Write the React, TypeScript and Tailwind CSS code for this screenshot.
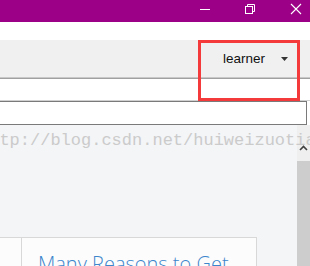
import React from "react";

export default function App() {
  return (
    <div className="relative w-[310px] h-[266px] overflow-hidden bg-white flex flex-col" style={{ fontFamily: "'Liberation Sans', Arial, sans-serif" }}>
      {/* Title bar */}
      <div className="h-[22px] bg-[#9b0087] flex items-center justify-end shrink-0">
        <svg width="310" height="22" viewBox="0 0 310 22" className="block">
          <line x1="200" y1="9.5" x2="210" y2="9.5" stroke="#fff" strokeWidth="1" />
          <rect x="245.5" y="6.5" width="7" height="7" fill="none" stroke="#fff" strokeWidth="1" />
          <path d="M247.5 6.5 V4.5 H254.5 V11.5 H252.5" fill="none" stroke="#fff" strokeWidth="1" />
          <path d="M291 4 L301 14 M301 4 L291 14" stroke="#fff" strokeWidth="1.1" />
        </svg>
      </div>
      <div className="h-[18px] bg-white shrink-0" />
      {/* Header */}
      <div className="h-[37px] bg-[#f0f0f0] flex items-center justify-end pr-[21px] shrink-0">
        <span className="text-[13.5px] text-[#111] leading-none pt-[1px]">learner</span>
        <svg width="8" height="5" viewBox="0 0 8 5" className="ml-[16px] mt-[1px]">
          <path d="M0 0 H7 L3.5 4 Z" fill="#333" />
        </svg>
      </div>
      <div className="h-px bg-[#c8c8c8] shrink-0" />
      <div className="h-px bg-[#a0a0a0] shrink-0" />
      <div className="h-[21px] bg-white shrink-0" />
      <div className="h-px bg-[#d0d0d0] shrink-0" />
      {/* Input */}
      <div className="h-[24px] w-[308px] ml-[-1px] border border-[#7a7a7a] bg-white shrink-0" />
      {/* Content */}
      <div className="flex-1 flex min-h-0">
        <div className="w-[297px] bg-[#f4f5f7] flex flex-col pt-[112px]">
          <div className="ml-[-10px] w-[267px] h-[40px] border border-[#d8d8d8] bg-[#fcfcfc] flex">
            <div className="w-[31px] border-r border-[#d8d8d8] shrink-0" />
            <div className="pl-[16px] pt-[16px] text-[20px] font-light text-[#3d86cc] whitespace-nowrap leading-none" style={{ fontFamily: "'Open Sans', sans-serif" }}>
              Many Reasons to Get
            </div>
          </div>
        </div>
        <div className="w-[13px] flex flex-col">
          <div className="h-[36px] bg-[#efefef] flex items-center justify-center pt-[10px]">
            <svg width="9" height="6" viewBox="0 0 9 6">
              <path d="M1 5 L4.5 1.5 L8 5" fill="none" stroke="#404040" strokeWidth="1.6" />
            </svg>
          </div>
          <div className="flex-1 bg-[#cdcdcd]" />
        </div>
      </div>
      {/* Watermark */}
      <div className="absolute left-[-21px] top-[132px] text-[17px] text-[#cbcbcb] whitespace-nowrap leading-none" style={{ fontFamily: "'Liberation Mono', monospace" }}>
        http://blog.csdn.net/huiweizuotian
      </div>
      {/* Red annotation box */}
      <div className="absolute left-[198px] top-[40px] w-[102px] h-[61px] border-[3px] border-[#f43a3a]" />
    </div>
  );
}
